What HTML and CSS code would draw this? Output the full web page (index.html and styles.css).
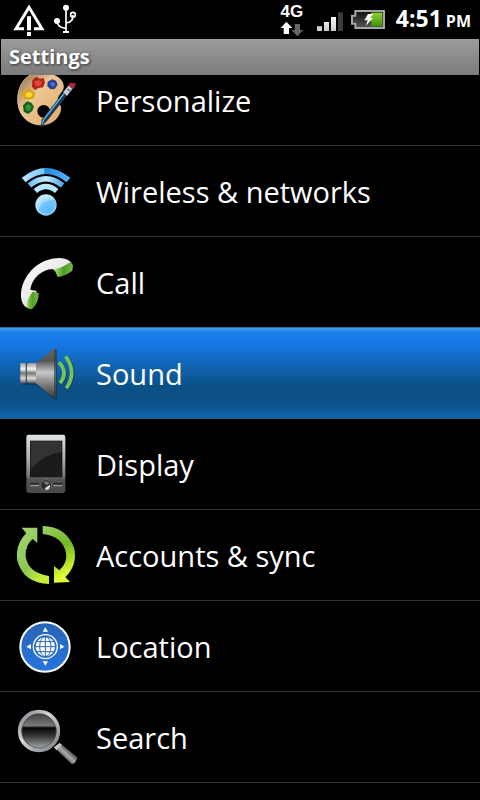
FILE: index.html
```html
<!DOCTYPE html>
<html lang="en">
<head>
  <meta charset="UTF-8">
  <meta name="viewport" content="width=device-width, initial-scale=1.0">
  <title>Settings</title>
  <link rel="stylesheet" href="styles.css">
</head>
<body>
  <header class="status-bar">
    <svg class="icon-alert" viewBox="36 6 102 102" aria-hidden="true">
      <path d="M72 83H48L87 19L126 83H102" fill="none" stroke="#fff" stroke-width="9"/>
      <path d="M81 46h12v42h-12zM81 93h12v12h-12z" fill="#fff"/>
    </svg>
    <svg class="icon-usb" viewBox="159 6 72 102" aria-hidden="true">
      <g fill="none" stroke="#fff" stroke-width="5">
        <path d="M198 20V94M171 60Q172 80 198 82M219 42Q220 64 198 66"/>
        <circle cx="219" cy="41" r="7"/>
      </g>
      <g fill="#fff">
        <circle cx="198" cy="20" r="9"/>
        <circle cx="171" cy="60" r="9"/>
        <path d="M189 90h18v6h-18z"/>
      </g>
    </svg>
    <div class="network">
      <span>4G</span>
      <svg class="icon-arrows" viewBox="120 63 72 48" aria-hidden="true">
        <path d="M139 65L157 84H147V102H131V84H122Z" fill="#fff"/>
        <path d="M172 109L155 90H164V72H180V90H190Z" fill="#666"/>
      </svg>
    </div>
    <svg class="icon-signal" viewBox="228 33 84 63" aria-hidden="true">
      <defs>
        <linearGradient id="bars" x1="0" y1="0" x2="0" y2="1">
          <stop offset="0" stop-color="#fff"/>
          <stop offset="1" stop-color="#c8c8c8"/>
        </linearGradient>
      </defs>
      <path d="M231 79h15v14h-15zM252 66h15v27h-15zM273 51h15v42h-15z" fill="url(#bars)"/>
      <path d="M294 37h15v56h-15z" fill="#3c3c3c"/>
    </svg>
    <svg class="icon-battery" viewBox="330 27 108 63" aria-hidden="true">
      <defs>
        <linearGradient id="charge" x1="0" y1="0" x2="0" y2="1">
          <stop offset="0" stop-color="#8fd035"/>
          <stop offset="1" stop-color="#3c9208"/>
        </linearGradient>
        <linearGradient id="empty" x1="0" y1="0" x2="0" y2="1">
          <stop offset="0" stop-color="#111"/>
          <stop offset="1" stop-color="#555"/>
        </linearGradient>
      </defs>
      <path d="M346 33H432V84H346V71H336V47H346Z" fill="url(#empty)" stroke="#a5a5a5" stroke-width="6"/>
      <path d="M393 38h34v41h-34z" fill="url(#charge)"/>
      <path d="M384 42H399L391 54H399L378 77L383 61H373Z" fill="#fff"/>
    </svg>
    <time class="clock" datetime="16:51">4:51 <small>PM</small></time>
  </header>

  <h1 class="title-bar">Settings</h1>

  <nav>
    <ul class="settings-list">
      <li>
        <a href="#personalize">
          <svg viewBox="42 -6 192 192" aria-hidden="true">
            <defs>
              <linearGradient id="wood" x1="0" y1="0" x2="1" y2="1">
                <stop offset="0" stop-color="#80633d"/>
                <stop offset=".4" stop-color="#ecc795"/>
                <stop offset="1" stop-color="#e3a860"/>
              </linearGradient>
            </defs>
            <path d="M120 8C165 8 192 28 190 52C188 68 170 76 172 92C174 104 184 104 182 118C178 145 154 165 122 165C80 163 52 132 53 87C54 42 80 8 120 8Z" fill="url(#wood)" stroke="#f7dfb5" stroke-width="2"/>
            <circle cx="131" cy="124" r="19" fill="#080604"/>
            <path d="M97 30l12-10 10 6 12-2 4 14-6 14-14 2-10 6-9-10z" fill="#b52018"/>
            <path d="M103 34l12-4 12 6-6 12-14 1z" fill="#db4735"/>
            <path d="M143 35l13-7 12 4 5 12-9 13-12 1-10-9z" fill="#263f9d"/>
            <path d="M149 39l12-2 5 8-8 7z" fill="#4f70cb"/>
            <path d="M66 67l14-3 6-9 10 8 9 4-3 18-15 4-15-3-5-9z" fill="#dda507"/>
            <path d="M76 69l14-3 8 6-5 10-15-1z" fill="#fbd83b"/>
            <path d="M69 106l12-12 13 4 8 12-6 14-12 8-13-7z" fill="#175f20"/>
            <path d="M76 108l10-6 9 8-6 12-10-2z" fill="#349239"/>
            <path d="M189 68L200 78L141 153L121 172L126 148Z" fill="#173b5e"/>
            <path d="M192 71L132 148L126 162" fill="none" stroke="#6cb5e3" stroke-width="4"/>
            <path d="M189 67L207 45L219 54L201 78Z" fill="#c8cdd0"/>
            <path d="M202 57l10 8" stroke="#5b6267" stroke-width="4"/>
            <path d="M204 46L211 38L228 40L222 54L216 56Z" fill="#a42b42"/>
          </svg>
          Personalize
        </a>
      </li>
      <li>
        <a href="#wireless">
          <svg viewBox="42 27 192 192" aria-hidden="true">
            <defs>
              <linearGradient id="wave" x1="0" y1="0" x2="1" y2="0">
                <stop offset="0" stop-color="#b5e4ff"/>
                <stop offset=".46" stop-color="#7ac4fa"/>
                <stop offset=".47" stop-color="#2487e2"/>
                <stop offset="1" stop-color="#55b0f7"/>
              </linearGradient>
              <linearGradient id="wave-light" x1="0" y1="0" x2="1" y2="0">
                <stop offset="0" stop-color="#6fbcf4"/>
                <stop offset=".5" stop-color="#c3eaff"/>
                <stop offset="1" stop-color="#4fa7ef"/>
              </linearGradient>
              <radialGradient id="ball" cx=".65" cy=".75" r=".8">
                <stop offset="0" stop-color="#6cc3fb"/>
                <stop offset=".5" stop-color="#92d4ff"/>
                <stop offset="1" stop-color="#d2efff"/>
              </radialGradient>
            </defs>
            <g fill="none" stroke-width="18">
              <path d="M71 90Q138 36 205 90" stroke="url(#wave)"/>
              <path d="M88 106Q138 66 188 106" stroke="url(#wave-light)" stroke-width="16"/>
              <path d="M106 123Q138 96 170 123" stroke="#b9e5ff" stroke-width="16"/>
            </g>
            <circle cx="138" cy="165" r="32" fill="url(#ball)"/>
            <path d="M114 180Q124 152 165 148Q173 175 151 190Q130 196 114 180Z" fill="#49adf5" opacity=".4"/>
          </svg>
          Wireless &amp; networks
        </a>
      </li>
      <li>
        <a href="#call">
          <svg viewBox="42 30 192 192" aria-hidden="true">
            <defs>
              <linearGradient id="handset" x1="0" y1="0" x2="1" y2="1">
                <stop offset="0" stop-color="#fff"/>
                <stop offset="1" stop-color="#d3d3d3"/>
              </linearGradient>
              <linearGradient id="pad" x1="0" y1="0" x2="1" y2="0">
                <stop offset="0" stop-color="#a3dc68"/>
                <stop offset=".5" stop-color="#4f9d24"/>
                <stop offset="1" stop-color="#76b94b"/>
              </linearGradient>
            </defs>
            <path d="M78 202C64 192 60 170 65 145C77 101 113 55 180 54Q205 55 215 69L170 97L158 87C126 89 96 113 91 149L110 153L92 202Z" fill="url(#handset)"/>
            <path d="M79 202Q80 178 98 155L116 159Q117 186 96 208Q86 208 79 202Z" fill="url(#pad)"/>
            <path d="M163 88Q188 83 211 66L219 76L217 92Q199 107 173 111Z" fill="url(#pad)"/>
          </svg>
          Call
        </a>
      </li>
      <li class="selected">
        <a href="#sound" aria-current="true">
          <svg viewBox="42 63 192 192" aria-hidden="true">
            <defs>
              <linearGradient id="metal" x1="0" y1="0" x2="0" y2="1">
                <stop offset="0" stop-color="#686868"/>
                <stop offset=".25" stop-color="#555"/>
                <stop offset=".48" stop-color="#c9c9c9"/>
                <stop offset=".62" stop-color="#999"/>
                <stop offset="1" stop-color="#343434"/>
              </linearGradient>
              <linearGradient id="magnet" x1="0" y1="0" x2="0" y2="1">
                <stop offset="0" stop-color="#999"/>
                <stop offset=".3" stop-color="#f5f5f5"/>
                <stop offset=".5" stop-color="#777"/>
                <stop offset=".75" stop-color="#ddd"/>
                <stop offset="1" stop-color="#555"/>
              </linearGradient>
            </defs>
            <path d="M67 134H112L171 89V245L110 196H67Z" fill="#05213d" opacity=".4"/>
            <path d="M61 129H77V133H84V129H110V190H84V186H77V190H61Z" fill="url(#magnet)"/>
            <path d="M79 132v55" stroke="#555" stroke-width="4"/>
            <path d="M108 130L163 85Q167 84 168 90V230Q167 238 161 235L108 190Z" fill="url(#metal)"/>
            <path d="M165 88V233" stroke="#383838" stroke-width="4"/>
            <g fill="none" stroke-width="11">
              <path d="M180 129Q208 158 183 191M200 111Q236 157 203 207" stroke="#12395a" opacity=".6"/>
              <path d="M177 127Q206 158 180 189M197 109Q232 157 199 205" stroke="#78c450"/>
            </g>
          </svg>
          Sound
        </a>
      </li>
      <li>
        <a href="#display">
          <svg viewBox="42 36 192 192" aria-hidden="true">
            <defs>
              <linearGradient id="case" x1="0" y1="0" x2="0" y2="1">
                <stop offset="0" stop-color="#e2e2e2"/>
                <stop offset=".4" stop-color="#b0b0b0"/>
                <stop offset=".72" stop-color="#747474"/>
                <stop offset=".76" stop-color="#555"/>
                <stop offset="1" stop-color="#484848"/>
              </linearGradient>
            </defs>
            <rect x="79" y="44" width="117" height="175" rx="7" fill="url(#case)"/>
            <rect x="90" y="62" width="97" height="110" fill="#171717"/>
            <path d="M92 64H185V96Q128 105 92 151Z" fill="#333"/>
            <path d="M185 96V170H92V151Q128 105 185 96Z" fill="#1b1b1b"/>
            <path d="M90 191h27M160 191h27" stroke="#292929" stroke-width="5"/>
            <path d="M91 197h26M160 197h26" stroke="#aaa" stroke-width="3"/>
            <circle cx="138" cy="195" r="16" fill="#292929" stroke="#777" stroke-width="2"/>
            <path d="M129 186Q140 180 149 190L140 196Z" fill="#777"/>
            <path d="M134 205L150 194Q152 207 139 210Z" fill="#ddd"/>
          </svg>
          Display
        </a>
      </li>
      <li>
        <a href="#accounts">
          <svg viewBox="42 24 192 192" aria-hidden="true">
            <defs>
              <linearGradient id="sync-left" x1="0" y1="0" x2=".6" y2="1">
                <stop offset="0" stop-color="#a7d579"/>
                <stop offset=".65" stop-color="#8bc653"/>
                <stop offset="1" stop-color="#c6ee38"/>
              </linearGradient>
              <linearGradient id="sync-right" x1="0" y1="0" x2=".3" y2="1">
                <stop offset="0" stop-color="#9bce68"/>
                <stop offset=".5" stop-color="#73b823"/>
                <stop offset="1" stop-color="#e2fc38"/>
              </linearGradient>
            </defs>
            <path d="M65 38H112V84L98 72Q75 91 77 124Q84 174 147 183V207Q71 204 52 137Q45 88 79 55Z" fill="url(#sync-left)"/>
            <path d="M128 33Q199 35 222 98Q234 149 196 186L210 201L162 203V153L178 166Q203 143 198 113Q187 63 128 57Z" fill="url(#sync-right)"/>
          </svg>
          Accounts &amp; sync
        </a>
      </li>
      <li>
        <a href="#location">
          <svg viewBox="42 27 192 192" aria-hidden="true">
            <defs>
              <linearGradient id="disc" x1="0" y1="0" x2="0" y2="1">
                <stop offset="0" stop-color="#2964b5"/>
                <stop offset="1" stop-color="#2675df"/>
              </linearGradient>
            </defs>
            <circle cx="135" cy="126" r="74" fill="url(#disc)" stroke="#fff" stroke-width="6"/>
            <circle cx="136" cy="125" r="36" fill="none" stroke="#fff" stroke-width="4"/>
            <circle cx="136" cy="125" r="29" fill="#fff"/>
            <g fill="none" stroke="#2868bc" stroke-width="3">
              <path d="M136 95V155M106 125H166M111 110H161M111 140H161"/>
              <ellipse cx="136" cy="125" rx="17" ry="30"/>
            </g>
            <path d="M136 67L144 80H128ZM136 182L144 169H128ZM79 125L93 117V133ZM193 125L180 117V133Z" fill="#fff"/>
          </svg>
          Location
        </a>
      </li>
      <li>
        <a href="#search">
          <svg viewBox="42 30 192 192" aria-hidden="true">
            <defs>
              <linearGradient id="rim" x1="0" y1="0" x2="1" y2="1">
                <stop offset="0" stop-color="#777b80"/>
                <stop offset=".4" stop-color="#d5d9df"/>
                <stop offset="1" stop-color="#777b82"/>
              </linearGradient>
              <linearGradient id="lens" x1="0" y1="0" x2="0" y2="1">
                <stop offset="0" stop-color="#383838"/>
                <stop offset=".36" stop-color="#7a7a7a"/>
                <stop offset=".42" stop-color="#050505"/>
                <stop offset=".62" stop-color="#343434"/>
                <stop offset="1" stop-color="#bbb"/>
              </linearGradient>
              <linearGradient id="handle" x1="0" y1="1" x2="1" y2="0">
                <stop offset=".3" stop-color="#333"/>
                <stop offset=".5" stop-color="#aaa"/>
                <stop offset=".75" stop-color="#222"/>
              </linearGradient>
            </defs>
            <path d="M162 157L179 144L232 187Q228 205 216 208Z" fill="url(#handle)"/>
            <path d="M162 157L179 144L186 150L169 166Z" fill="#c7c7c7"/>
            <circle cx="117" cy="108" r="58" fill="url(#lens)" stroke="url(#rim)" stroke-width="11"/>
            <circle cx="117" cy="108" r="51" fill="none" stroke="#444" stroke-width="2"/>
          </svg>
          Search
        </a>
      </li>
    </ul>
  </nav>
</body>
</html>
```

FILE: styles.css
```css
* {
  box-sizing: border-box;
}
body {
  margin: 0;
  background-color: #000;
  color: #fff;
  font-family: "Open Sans", "Noto Sans", sans-serif;
}
svg {
  display: block;
  flex: none;
}
.status-bar {
  display: flex;
  align-items: center;
  height: 39px;
  padding: 0 9px 0 12px;
}
.icon-alert {
  width: 34px;
  height: 34px;
}
.icon-usb {
  width: 24px;
  height: 34px;
  margin-left: 7px;
}
.network {
  display: flex;
  flex-direction: column;
  align-items: center;
  margin-left: auto;
  font: bold 17px/18px "Liberation Sans", sans-serif;
}
.icon-arrows {
  width: 24px;
  height: 16px;
}
.icon-signal {
  width: 28px;
  height: 21px;
  margin: 4px 6px 0 12px;
}
.icon-battery {
  width: 36px;
  height: 21px;
}
.clock {
  display: flex;
  align-items: baseline;
  gap: 4px;
  margin-left: 10px;
  font-size: 23px;
  font-weight: bold;
  line-height: 36px;
  white-space: nowrap;
}
.clock small {
  font-size: 16px;
}
.title-bar {
  position: relative;
  z-index: 1;
  margin: 0 1px;
  padding: 0 8px;
  background: linear-gradient(#9c9c9c, #7b7b7b);
  font-size: 20px;
  line-height: 36px;
  text-shadow: 1px 1px 3px #333;
}
/* the list is scrolled a little way under the title bar */
.settings-list {
  margin: -20px 0 0;
  padding: 0;
  list-style: none;
}
.settings-list li {
  border-bottom: 1px solid #333;
}
.settings-list a {
  display: flex;
  align-items: center;
  gap: 18px;
  height: 90px;
  padding: 0 14px;
  color: #fff;
  font-size: 29px;
  text-decoration: none;
}
.settings-list svg {
  width: 64px;
  height: 64px;
}
.settings-list .selected {
  border-bottom-color: #1f5f8f;
  background: linear-gradient(#4a9cea, #1b7de8 5%, #167be9 15%, #0b5086 65%, #0c5289 85%, #1267ab);
  box-shadow: 0 -1px #2a6ba8;
}
```
